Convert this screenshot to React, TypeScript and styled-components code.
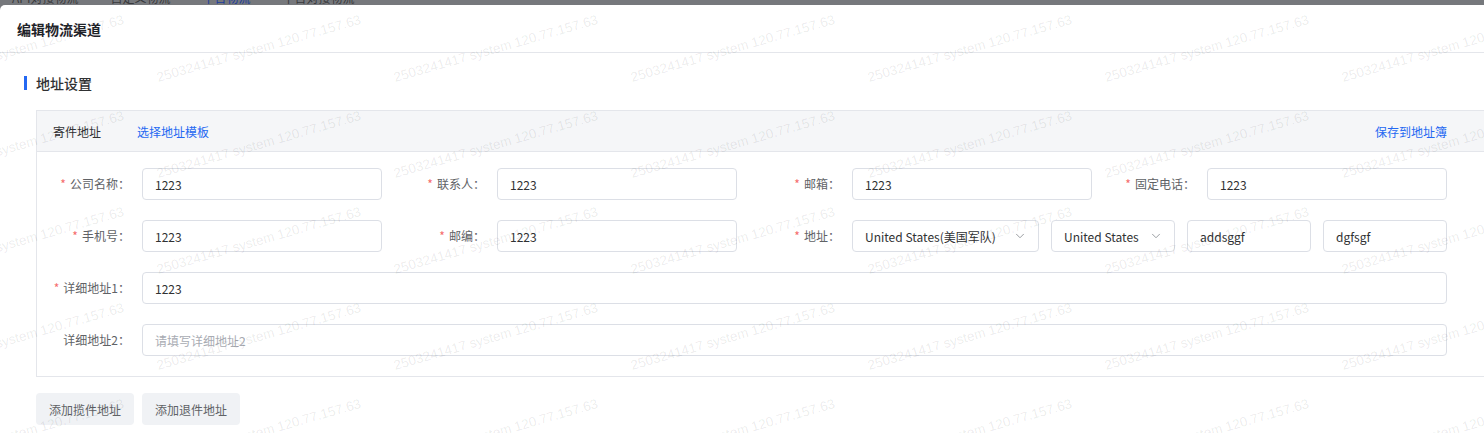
import styled, { createGlobalStyle } from "styled-components";
import { ChevronDown } from "lucide-react";

const GlobalStyle = createGlobalStyle`
  html, body {
    margin: 0;
    padding: 0;
    overflow: hidden;
    background: #76787c;
  }
  body {
    font-family: "Noto Sans CJK SC", "Noto Sans", sans-serif;
  }
  * {
    box-sizing: border-box;
  }
`;

const WM_COLS = 7;
const WM_ROWS = 6;

function Field({
  label,
  required,
  span,
  children,
}: {
  label: string;
  required?: boolean;
  span?: number;
  children: React.ReactNode;
}) {
  return (
    <FormItem $span={span || 1}>
      <Label>
        {required && <Star>*</Star>}
        {label}：
      </Label>
      <Control>{children}</Control>
    </FormItem>
  );
}

function Select({ value, width }: { value: string; width: number }) {
  return (
    <SelectBox $width={width}>
      <SelectValue>{value}</SelectValue>
      <ChevronDown size={14} strokeWidth={1.5} color="#8d9095" />
    </SelectBox>
  );
}

export default function App() {
  const marks = [];
  for (let i = 0; i < WM_COLS * WM_ROWS; i++) {
    marks.push(
      <MarkCell key={i}>
        <Mark>2503241417 system 120.77.157.63</Mark>
      </MarkCell>
    );
  }

  return (
    <Page>
      <GlobalStyle />
      <Backdrop>
        <Tabs>
          <Tab>API对接物流</Tab>
          <Tab>自定义物流</Tab>
          <Tab $active>平台物流</Tab>
          <Tab>平台对接物流</Tab>
        </Tabs>
      </Backdrop>

      <Modal>
        <ModalHeader>
          <ModalTitle>编辑物流渠道</ModalTitle>
        </ModalHeader>
        <ModalBody>
          <SectionTitle>地址设置</SectionTitle>

          <AddressCard>
            <CardHeader>
              <CardTitle>寄件地址</CardTitle>
              <Link>选择地址模板</Link>
              <Spacer />
              <Link>保存到地址簿</Link>
            </CardHeader>

            <FormGrid>
              <Field label="公司名称" required>
                <TextInput readOnly value="1223" />
              </Field>
              <Field label="联系人" required>
                <TextInput readOnly value="1223" />
              </Field>
              <Field label="邮箱" required>
                <TextInput readOnly value="1223" />
              </Field>
              <Field label="固定电话" required>
                <TextInput readOnly value="1223" />
              </Field>

              <Field label="手机号" required>
                <TextInput readOnly value="1223" />
              </Field>
              <Field label="邮编" required>
                <TextInput readOnly value="1223" />
              </Field>
              <Field label="地址" required span={2}>
                <Select value="United States(美国军队)" width={187} />
                <Select value="United States" width={124} />
                <TextInput readOnly value="addsggf" $width={124} />
                <TextInput readOnly value="dgfsgf" $width={124} />
              </Field>

              <Field label="详细地址1" required span={4}>
                <TextInput readOnly value="1223" />
              </Field>
              <Field label="详细地址2" span={4}>
                <TextInput readOnly placeholder="请填写详细地址2" />
              </Field>
            </FormGrid>
          </AddressCard>

          <ButtonRow>
            <GrayButton>添加揽件地址</GrayButton>
            <GrayButton>添加退件地址</GrayButton>
          </ButtonRow>
        </ModalBody>
      </Modal>

      <Watermarks>{marks}</Watermarks>
    </Page>
  );
}

const Page = styled.div`
  position: relative;
  width: 1484px;
  height: 433px;
  overflow: hidden;
  display: flex;
  flex-direction: column;
`;

const Backdrop = styled.div`
  height: 5px;
  flex-shrink: 0;
  overflow: hidden;
  background: #76787c;
`;

const Tabs = styled.div`
  display: flex;
  gap: 32px;
  padding-left: 12px;
  margin-top: -9px;
`;

const Tab = styled.span<{ $active?: boolean }>`
  font-size: 12px;
  line-height: 14px;
  color: ${(p) => (p.$active ? "#1c3c9c" : "#393a3d")};
`;

const Modal = styled.div`
  width: 1530px;
  flex: 1;
  background: #fff;
  border-radius: 5px 0 0 0;
`;

const ModalHeader = styled.div`
  height: 48px;
  padding: 0 17px;
  display: flex;
  align-items: center;
  border-bottom: 1px solid #e4e6eb;
`;

const ModalTitle = styled.h2`
  margin: 0;
  font-size: 14px;
  font-weight: 700;
  color: #1f2329;
`;

const ModalBody = styled.div`
  padding: 20px 0 0 24px;
`;

const SectionTitle = styled.div`
  height: 20px;
  display: flex;
  align-items: center;
  font-size: 14px;
  font-weight: 500;
  color: #303133;

  &::before {
    content: "";
    width: 3px;
    height: 14px;
    margin-right: 9px;
    background: #2468f2;
  }
`;

const AddressCard = styled.div`
  width: 1480px;
  margin: 17px 0 0 12px;
  border: 1px solid #e4e6eb;
`;

const CardHeader = styled.div`
  height: 41px;
  padding: 0 68px 0 16px;
  display: flex;
  align-items: center;
  background: #f5f6f8;
  border-bottom: 1px solid #e4e6eb;
  font-size: 12px;
`;

const CardTitle = styled.span`
  color: #303133;
  margin-right: 36px;
`;

const Link = styled.a`
  color: #2468f2;
  cursor: pointer;
`;

const Spacer = styled.div`
  flex: 1;
`;

const FormGrid = styled.div`
  padding: 16px 68px 20px 0;
  display: grid;
  grid-template-columns: repeat(4, 345px);
  column-gap: 10px;
  row-gap: 20px;
`;

const FormItem = styled.div<{ $span: number }>`
  grid-column: span ${(p) => p.$span};
  display: flex;
`;

const Label = styled.label`
  width: 105px;
  flex-shrink: 0;
  padding-right: 12px;
  text-align: right;
  font-size: 12px;
  line-height: 32px;
  color: #606266;
  white-space: nowrap;
`;

const Star = styled.span`
  color: #f56c6c;
  margin-right: 4px;
`;

const Control = styled.div`
  flex: 1;
  display: flex;
  gap: 12px;
`;

const TextInput = styled.input<{ $width?: number }>`
  ${(p) => (p.$width ? `width: ${p.$width}px;` : "flex: 1; width: 100%;")}
  height: 32px;
  padding: 0 12px;
  border: 1px solid #dcdfe6;
  border-radius: 4px;
  outline: none;
  font-family: inherit;
  font-size: 12px;
  color: #303133;
  background: transparent;

  &::placeholder {
    color: #a8abb2;
  }
`;

const SelectBox = styled.div<{ $width: number }>`
  width: ${(p) => p.$width}px;
  height: 32px;
  padding: 0 11px 0 12px;
  display: flex;
  align-items: center;
  border: 1px solid #dcdfe6;
  border-radius: 4px;
  font-size: 12px;
  color: #303133;
`;

const SelectValue = styled.span`
  flex: 1;
  white-space: nowrap;
  overflow: hidden;
`;

const ButtonRow = styled.div`
  display: flex;
  gap: 8px;
  margin: 16px 0 0 12px;
`;

const GrayButton = styled.button`
  height: 32px;
  padding: 0 13px;
  border: none;
  border-radius: 4px;
  background: #f0f2f5;
  font-family: inherit;
  font-size: 12px;
  color: #606266;
`;

const Watermarks = styled.div`
  position: absolute;
  left: -97px;
  top: -96px;
  display: grid;
  grid-template-columns: repeat(${WM_COLS}, 237px);
  grid-auto-rows: 96px;
  pointer-events: none;
`;

const MarkCell = styled.div`
  display: flex;
  align-items: center;
  justify-content: center;
`;

const Mark = styled.span`
  white-space: nowrap;
  font-family: "Liberation Sans", sans-serif;
  font-size: 13.5px;
  color: rgba(0, 0, 0, 0.085);
  transform: rotate(-16deg);
`;
